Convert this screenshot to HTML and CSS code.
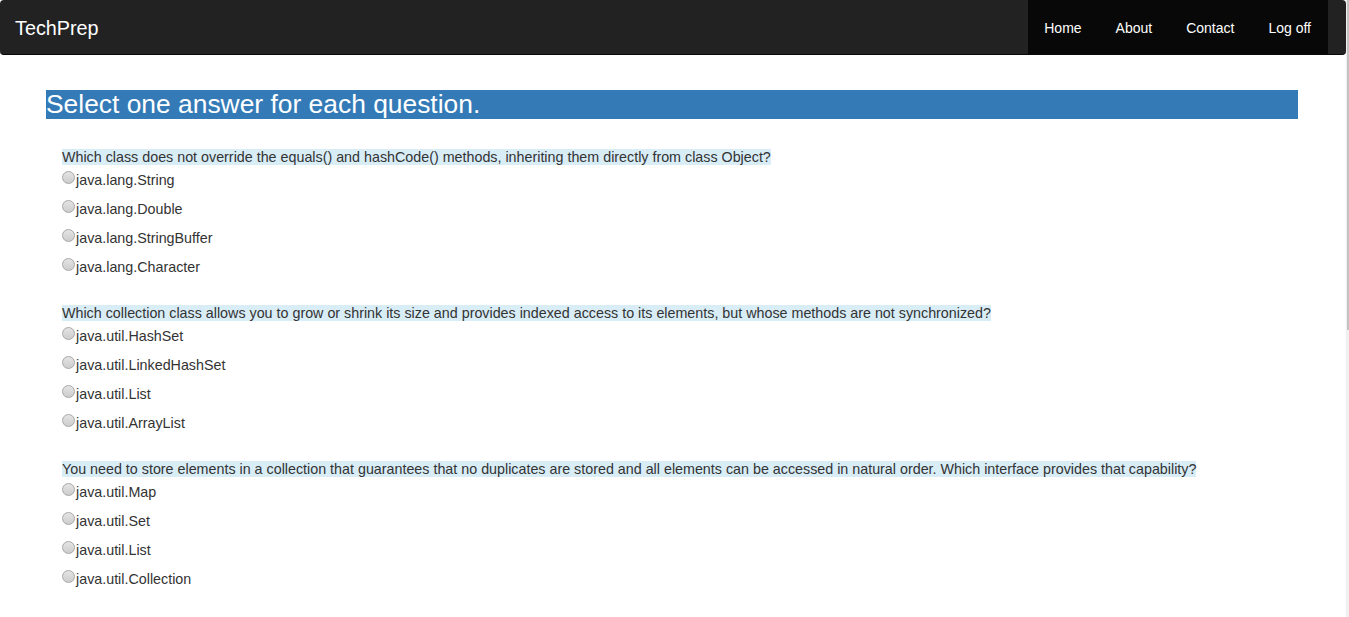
FILE: index.html
```html
<!DOCTYPE html>
<html>
<head>
<meta charset="utf-8">
<title>TechPrep</title>
<link rel="stylesheet" href="styles.css">
</head>
<body>
<div class="page">
  <nav class="navbar">
    <a class="brand" href="#">TechPrep</a>
    <ul class="nav">
      <li><a href="#">Home</a></li>
      <li><a href="#">About</a></li>
      <li><a href="#">Contact</a></li>
      <li><a href="#">Log off</a></li>
    </ul>
  </nav>
  <main class="content">
    <h2 class="title">Select one answer for each question.</h2>

    <div class="question">
      <div class="qtext"><span class="hl">Which class does not override the equals() and hashCode() methods, inheriting them directly from class Object?</span></div>
      <label class="opt"><input type="radio" name="q1"><span>java.lang.String</span></label>
      <label class="opt"><input type="radio" name="q1"><span>java.lang.Double</span></label>
      <label class="opt"><input type="radio" name="q1"><span>java.lang.StringBuffer</span></label>
      <label class="opt"><input type="radio" name="q1"><span>java.lang.Character</span></label>
    </div>

    <div class="question">
      <div class="qtext"><span class="hl">Which collection class allows you to grow or shrink its size and provides indexed access to its elements, but whose methods are not synchronized?</span></div>
      <label class="opt"><input type="radio" name="q2"><span>java.util.HashSet</span></label>
      <label class="opt"><input type="radio" name="q2"><span>java.util.LinkedHashSet</span></label>
      <label class="opt"><input type="radio" name="q2"><span>java.util.List</span></label>
      <label class="opt"><input type="radio" name="q2"><span>java.util.ArrayList</span></label>
    </div>

    <div class="question">
      <div class="qtext"><span class="hl">You need to store elements in a collection that guarantees that no duplicates are stored and all elements can be accessed in natural order. Which interface provides that capability?</span></div>
      <label class="opt"><input type="radio" name="q3"><span>java.util.Map</span></label>
      <label class="opt"><input type="radio" name="q3"><span>java.util.Set</span></label>
      <label class="opt"><input type="radio" name="q3"><span>java.util.List</span></label>
      <label class="opt"><input type="radio" name="q3"><span>java.util.Collection</span></label>
    </div>
  </main>
</div>
<div class="scrollbar"><div class="thumb"></div></div>
</body>
</html>
```
FILE: styles.css
```css
html, body {
  margin: 0;
  padding: 0;
  height: 617px;
  overflow: hidden;
}
body {
  display: flex;
  font-family: "Liberation Sans", Arial, sans-serif;
  font-size: 14.3px;
  color: #333;
  background: #fff;
}
.page {
  flex: 1;
  min-width: 0;
}
.navbar {
  display: flex;
  align-items: stretch;
  justify-content: space-between;
  height: 54px;
  background: #222;
  border-bottom: 1px solid #080808;
  border-radius: 4px;
  padding: 0 18px 0 15px;
}
.brand {
  color: #fff;
  text-decoration: none;
  font-size: 19.8px;
  line-height: 56px;
}
.nav {
  display: flex;
  gap: 4px;
  list-style: none;
  margin: 0;
  padding: 0 2px 0 1px;
  background: #080808;
}
.nav a {
  display: block;
  padding: 0 15px;
  color: #fff;
  text-decoration: none;
  font-size: 14px;
  line-height: 56px;
}
.content {
  padding: 35px 48px 0 46px;
}
.title {
  margin: 0 0 28px;
  background: #337ab7;
  color: #fff;
  font-weight: normal;
  font-size: 26.4px;
  line-height: 29px;
}
.question {
  display: flex;
  flex-direction: column;
  gap: 9px;
  padding-left: 16px;
  margin-bottom: 26px;
}
.qtext {
  line-height: 20px;
  margin-bottom: -6px;
}
.hl {
  background: #d9edf7;
}
.opt {
  display: flex;
  align-items: flex-start;
  line-height: 20px;
  height: 20px;
}
.opt input {
  appearance: none;
  -webkit-appearance: none;
  width: 13px;
  height: 13px;
  margin: 1px 1px 0 0;
  border-radius: 50%;
  border: 1px solid #a8a8a8;
  background: linear-gradient(#e4e4e4, #cdcdcd);
  box-sizing: border-box;
  flex: none;
}
.scrollbar {
  width: 3px;
  background: #f0f0f0;
  display: flex;
  justify-content: flex-end;
}
.thumb {
  width: 2px;
  height: 330px;
  background: #c2c2c2;
}
```
